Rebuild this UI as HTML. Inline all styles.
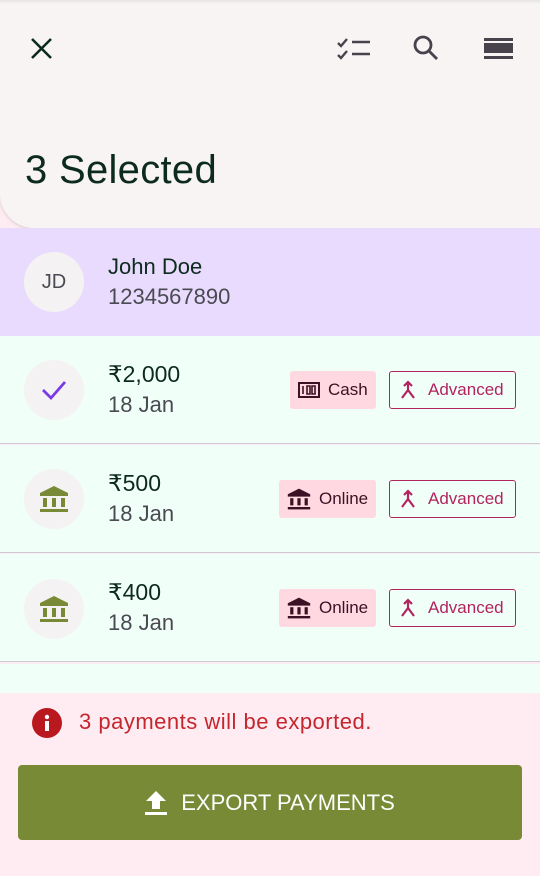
<!DOCTYPE html>
<html><head><meta charset="utf-8"><style>
*{margin:0;padding:0;box-sizing:border-box}
body{width:540px;height:876px;overflow:hidden;background:#fdecf1;font-family:"Liberation Sans",sans-serif;position:relative}
.hdr{position:absolute;left:0;top:0;width:540px;height:228px;background:#f8f4f4;border-bottom-left-radius:34px;box-shadow:0 1px 3px rgba(0,0,0,.15)}
.topline{position:absolute;left:0;top:0;width:540px;height:4px;background:linear-gradient(#e6e3e3,#f8f4f4)}
.title{position:absolute;left:25px;top:148px;font-size:40px;color:#0d2a1f;letter-spacing:0.3px}
.ic{position:absolute}
.jd{position:absolute;left:0;top:228px;width:540px;height:108px;background:#e9dbfd}
.av{position:absolute;left:24px;width:60px;height:60px;border-radius:50%;background:#f4f2f2;display:flex;align-items:center;justify-content:center}
.row{position:absolute;left:0;width:540px;height:108px;background:#f1fff9;border-bottom:1.5px solid #cdcbd2}
.amt{position:absolute;left:108px;font-size:23px;color:#0d2a1f}
.dt{position:absolute;left:108px;font-size:22px;color:#4a4a52}
.chip{position:absolute;height:38px;background:#ffd8e1;border-radius:3px;font-size:17px;color:#3b1224;display:flex;align-items:center;gap:8px;padding-left:8px}
.adv{position:absolute;left:389px;width:127px;height:38px;border:1.5px solid #b2245d;border-radius:3px;font-size:17px;color:#b2245d;display:flex;align-items:center;padding-left:10px;gap:12px}
.bottom{position:absolute;left:0;top:693px;width:540px;height:183px;background:#ffecf2}
</style></head><body>
<div class="hdr"><div class="topline"></div>
<svg class="ic" style="left:30px;top:37px" width="23" height="23" viewBox="0 0 23 23"><path d="M2 2L21 21M21 2L2 21" stroke="#0d2a1f" stroke-width="2.6"/></svg>
<svg class="ic" style="left:336px;top:36px" width="34" height="24" viewBox="0 0 34 24"><path d="M2 7l3 3 6-7M2 19l3 3 6-7" stroke="#47434c" stroke-width="2.4" fill="none"/><path d="M16 6h18M16 18h18" stroke="#47434c" stroke-width="2.6"/></svg>
<svg class="ic" style="left:412px;top:34px" width="28" height="28" viewBox="0 0 28 28"><circle cx="11" cy="11" r="8" stroke="#47434c" stroke-width="2.8" fill="none"/><path d="M17 17l8 8" stroke="#47434c" stroke-width="2.8"/></svg>
<svg class="ic" style="left:484px;top:38px" width="29" height="22" viewBox="0 0 29 22"><rect x="0" y="0" width="29" height="3" fill="#47434c"/><rect x="0" y="5" width="29" height="10" fill="#47434c"/><rect x="0" y="18" width="29" height="3" fill="#47434c"/></svg>
<div class="title">3 Selected</div>
</div>
<div class="jd">
<div class="av" style="top:24px;font-size:20px;color:#4a4a52">JD</div>
<div class="amt" style="top:26px;font-size:22px">John Doe</div>
<div class="dt" style="top:56px">1234567890</div>
</div>

<div class="row" style="top:336px">
<div class="av" style="top:24px"><svg width="28" height="22" viewBox="0 0 28 22"><path d="M3 11l8 8L25 3" stroke="#7a3ae8" stroke-width="2.8" fill="none"/></svg></div>
<div class="amt" style="top:25px">₹2,000</div><div class="dt" style="top:56px">18 Jan</div>
<div class="chip" style="left:290px;top:35px;width:86px"><svg width="22" height="16" viewBox="0 0 22 16"><rect x="1" y="1" width="20" height="14" fill="none" stroke="#3b1224" stroke-width="2"/><path d="M5 4v8M9 4h3v8h-3zM14 4h3v8h-3z" stroke="#3b1224" stroke-width="1.6" fill="none"/></svg>Cash</div>
<div class="adv" style="top:35px"><svg width="16" height="20" viewBox="0 0 16 20"><path d="M8 2v8L2 18M8 10l6 8M4 6l4-4 4 4" stroke="#b2245d" stroke-width="2.2" fill="none"/></svg>Advanced</div>
</div>

<div class="row" style="top:445px">
<div class="av" style="top:24px"><svg width="30" height="30" viewBox="0 0 30 30"><path d="M15 2L1 9v3h28V9z" fill="#788a35"/><rect x="4" y="14" width="4" height="9" fill="#788a35"/><rect x="13" y="14" width="4" height="9" fill="#788a35"/><rect x="22" y="14" width="4" height="9" fill="#788a35"/><rect x="1" y="25" width="28" height="3" fill="#788a35"/></svg></div>
<div class="amt" style="top:25px">₹500</div><div class="dt" style="top:56px">18 Jan</div>
<div class="chip" style="left:279px;top:35px;width:97px"><svg width="24" height="24" viewBox="0 0 30 30"><path d="M15 2L1 9v3h28V9z" fill="#3b1224"/><rect x="4" y="14" width="4" height="9" fill="#3b1224"/><rect x="13" y="14" width="4" height="9" fill="#3b1224"/><rect x="22" y="14" width="4" height="9" fill="#3b1224"/><rect x="1" y="25" width="28" height="3" fill="#3b1224"/></svg>Online</div>
<div class="adv" style="top:35px"><svg width="16" height="20" viewBox="0 0 16 20"><path d="M8 2v8L2 18M8 10l6 8M4 6l4-4 4 4" stroke="#b2245d" stroke-width="2.2" fill="none"/></svg>Advanced</div>
</div>

<div class="row" style="top:554px">
<div class="av" style="top:25px"><svg width="30" height="30" viewBox="0 0 30 30"><path d="M15 2L1 9v3h28V9z" fill="#788a35"/><rect x="4" y="14" width="4" height="9" fill="#788a35"/><rect x="13" y="14" width="4" height="9" fill="#788a35"/><rect x="22" y="14" width="4" height="9" fill="#788a35"/><rect x="1" y="25" width="28" height="3" fill="#788a35"/></svg></div>
<div class="amt" style="top:25px">₹400</div><div class="dt" style="top:56px">18 Jan</div>
<div class="chip" style="left:279px;top:35px;width:97px"><svg width="24" height="24" viewBox="0 0 30 30"><path d="M15 2L1 9v3h28V9z" fill="#3b1224"/><rect x="4" y="14" width="4" height="9" fill="#3b1224"/><rect x="13" y="14" width="4" height="9" fill="#3b1224"/><rect x="22" y="14" width="4" height="9" fill="#3b1224"/><rect x="1" y="25" width="28" height="3" fill="#3b1224"/></svg>Online</div>
<div class="adv" style="top:35px"><svg width="16" height="20" viewBox="0 0 16 20"><path d="M8 2v8L2 18M8 10l6 8M4 6l4-4 4 4" stroke="#b2245d" stroke-width="2.2" fill="none"/></svg>Advanced</div>
</div>
<div class="row" style="top:664px;height:40px;border:none"></div>

<div class="bottom">
<svg style="position:absolute;left:32px;top:15px" width="30" height="30" viewBox="0 0 30 30"><circle cx="15" cy="15" r="15" fill="#b9191e"/><rect x="13" y="13" width="4" height="10" fill="#fff"/><circle cx="15" cy="9" r="2.2" fill="#fff"/></svg>
<div style="position:absolute;left:79px;top:16px;font-size:22px;color:#c4262e;letter-spacing:0.5px">3 payments will be exported.</div>
<div style="position:absolute;left:18px;top:72px;width:504px;height:75px;background:#788a35;border-radius:4px;display:flex;align-items:center;justify-content:center;gap:14px;color:#fff;font-size:22px">
<svg width="22" height="26" viewBox="0 0 22 26"><path d="M11 1L1 11h6v8h8v-8h6z" fill="#fff"/><rect x="0" y="22" width="22" height="3" fill="#fff"/></svg>EXPORT PAYMENTS</div>
</div>
</body></html>
